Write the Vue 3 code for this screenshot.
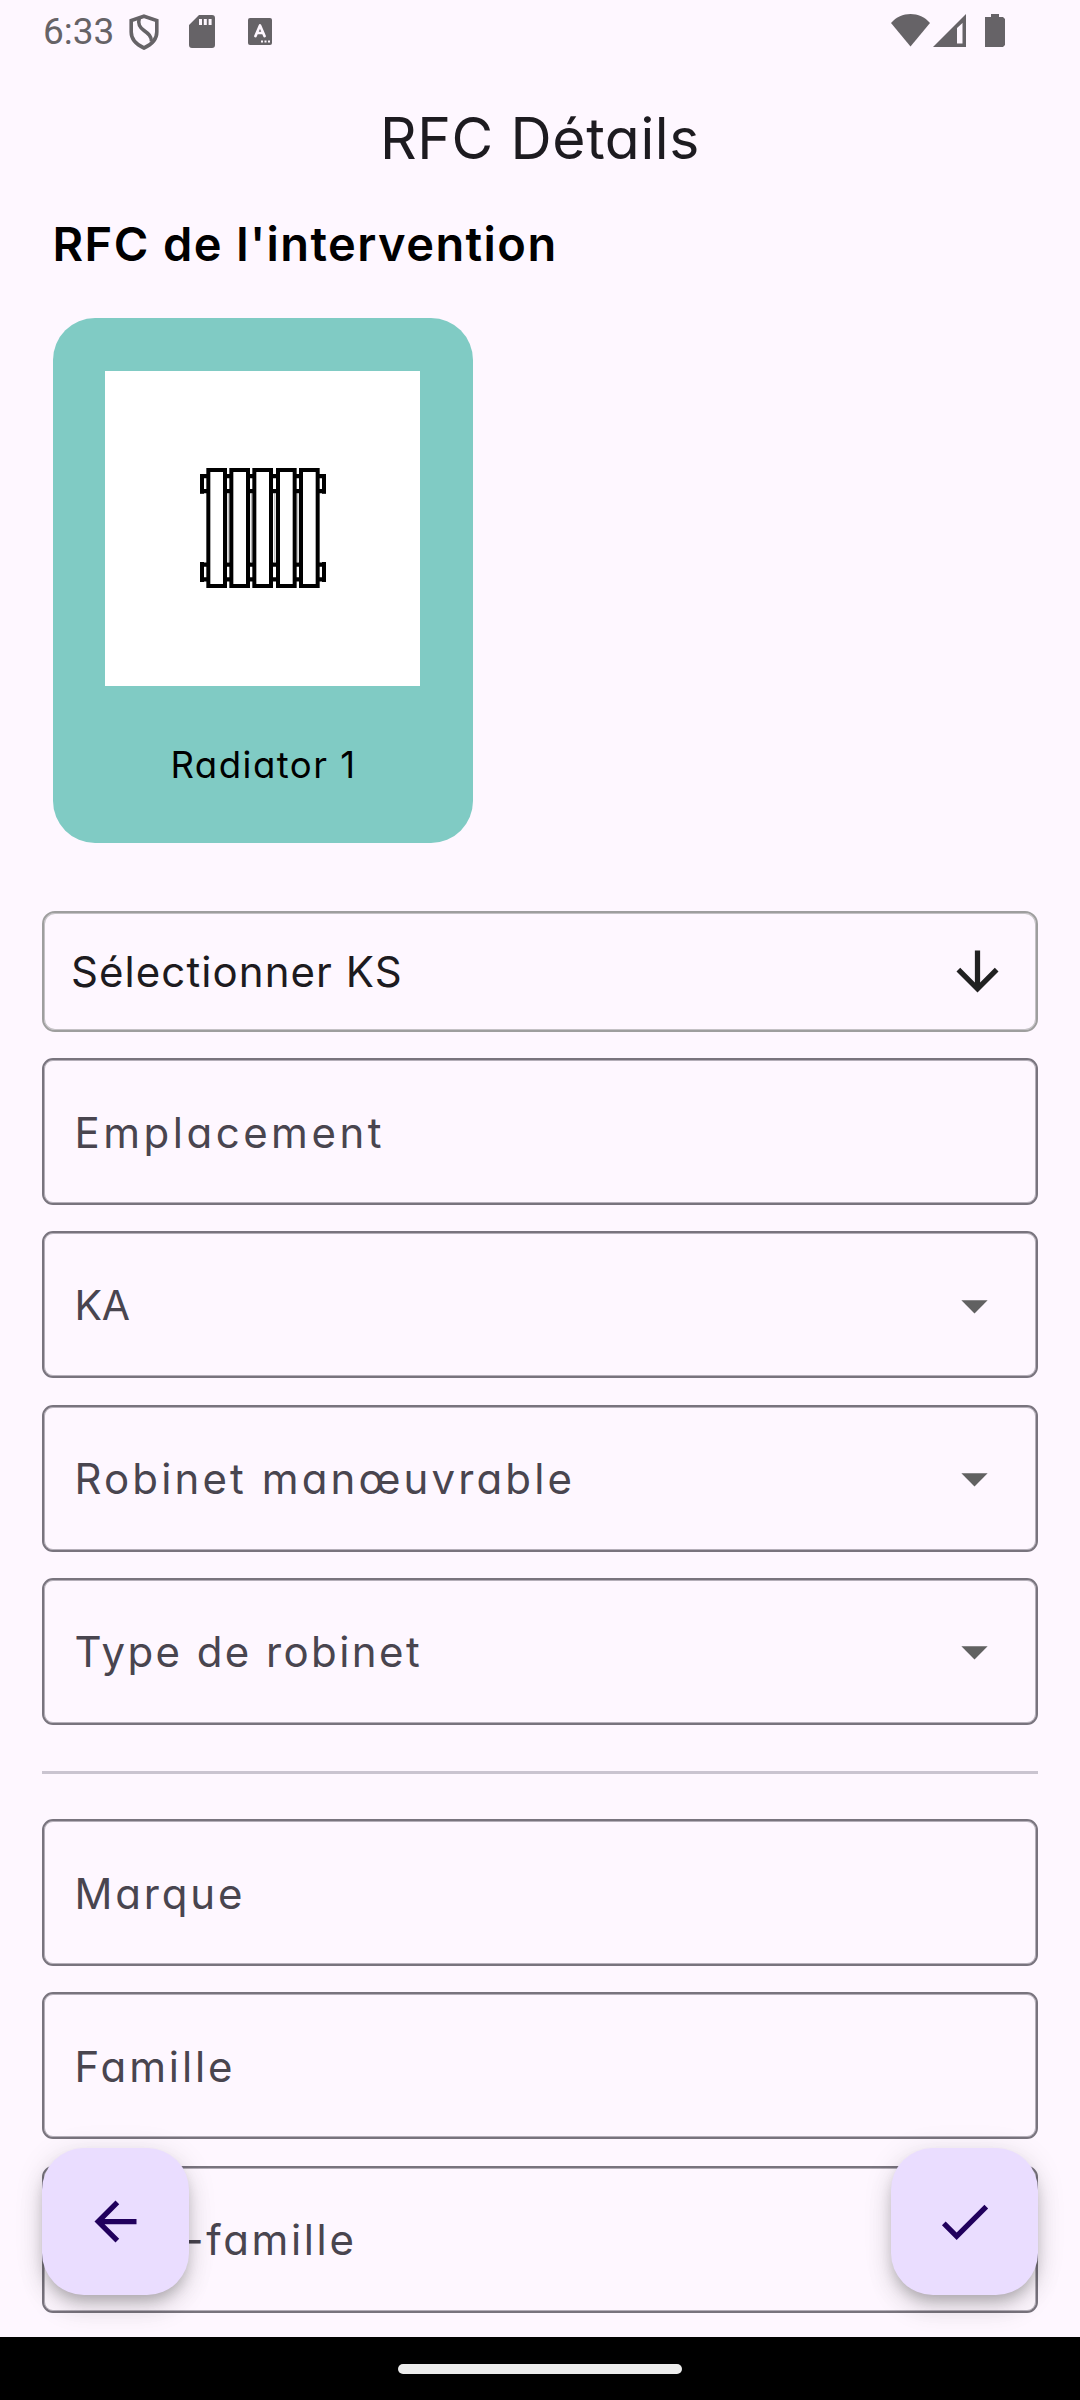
<script setup>
const fields = [
  { id: 'emplacement', label: 'Emplacement' },
  { id: 'ka', label: 'KA', select: true },
  { id: 'robinet', label: 'Robinet manœuvrable', select: true },
  { id: 'type', label: 'Type de robinet', select: true },
]

const productFields = [
  { id: 'marque', label: 'Marque' },
  { id: 'famille', label: 'Famille' },
  { id: 'sous-famille', label: 'Sous-famille' },
]

const radiatorBars = [85, 154, 223, 294, 363]
</script>

<template>
  <div class="screen">
    <header class="status-bar">
      <span class="clock">6:33</span>
      <svg class="ic-shield" viewBox="0 0 30 36" width="30" height="36">
        <path d="M15 2.200 27.800 6.500v11.500c0 7-5 12.500-12.800 16C7.200 30.500 2.200 25 2.200 18V6.500z" fill="none" stroke="#666367" stroke-width="3.600" />
        <path d="M10.300 4c-1.800 6.500.5 9.500 4.700 12.500s7.500 5.500 7.500 11" fill="none" stroke="#666367" stroke-width="3.600" />
      </svg>
      <svg class="ic-sd" viewBox="0 0 26 33" width="26" height="33">
        <path fill="#666367" fill-rule="evenodd" d="M10 0h13a3 3 0 0 1 3 3v27a3 3 0 0 1-3 3H3a3 3 0 0 1-3-3V10zM10 4v6h3V4zm4.800 0v6h3V4zm4.800 0v6h3V4z" />
      </svg>
      <svg class="ic-a" viewBox="0 0 24 27" width="24" height="27">
        <rect width="24" height="27" rx="2" fill="#666367" />
        <path d="M7.500 18 12 7.500 16.500 18M9 15h6" fill="none" stroke="#fef7ff" stroke-width="2.700" stroke-linecap="round" stroke-linejoin="round" />
        <path d="M13 22.500h2v2h-2zm3.500 0h2v2h-2zm3.500 0h2v2h-2z" fill="#fef7ff" />
      </svg>
      <div class="system-icons">
        <svg viewBox="0 0 39 33" width="39" height="33">
          <path d="M0 9C10-3 29-3 39 9L19.500 32.500z" fill="#666367" />
        </svg>
        <svg class="ic-signal" viewBox="0 0 33 33" width="33" height="33">
          <path fill="#666367" fill-rule="evenodd" d="M33 0v33H0zM29.500 9 24 14v15.500h5.500z" />
        </svg>
        <svg class="ic-battery" viewBox="0 0 20 33" width="20" height="33">
          <path d="M6 0h8v3h4l2 2v26l-2 2H0V3h6z" fill="#666367" />
        </svg>
      </div>
    </header>

    <div class="app-bar"><h1>RFC Détails</h1></div>

    <main>
      <h2>RFC de l'intervention</h2>

      <div class="card">
        <div class="card-image">
          <svg viewBox="9 27 480 480" width="160" height="160" fill="none" stroke="#000" stroke-width="12">
            <path d="M66 102v59M66 366v60M432 102v59M432 366v60" />
            <path d="M60 108.500H438M60 153.500H438M60 374H438M60 418H438" stroke-width="13" />
            <path d="M144.500 159v208M214 159v208M284.500 159v208M353.500 159v208" stroke="#777" stroke-width="2" />
            <rect v-for="x in radiatorBars" :key="x" :x="x" y="90" width="50" height="348" fill="#fff" />
          </svg>
        </div>
        <div class="card-label"><span>Radiator 1</span></div>
      </div>

      <button class="ks" type="button">
        <span>Sélectionner KS</span>
        <svg viewBox="0 0 24 24" width="63" height="63">
          <path d="M20 12l-1.410-1.410L13 16.170V4h-2v12.170l-5.580-5.590L4 12l8 8 8-8z" fill="#212121" />
        </svg>
      </button>

      <div class="fields">
        <div v-for="f in fields" :key="f.id" class="field">
          <span :class="f.id">{{ f.label }}</span>
          <svg v-if="f.select" viewBox="0 0 24 24" width="63" height="63">
            <path d="M7 10l5 5 5-5z" fill="#616161" />
          </svg>
        </div>
      </div>

      <div class="divider"></div>

      <div class="fields">
        <div v-for="f in productFields" :key="f.id" class="field">
          <span :class="f.id">{{ f.label }}</span>
        </div>
      </div>
    </main>

    <div class="fab-row">
      <button class="fab" type="button" aria-label="Retour">
        <svg viewBox="0 0 24 24" width="63" height="63">
          <path d="M20 11H7.830l5.590-5.590L12 4l-8 8 8 8 1.410-1.410L7.830 13H20v-2z" fill="#21005d" />
        </svg>
      </button>
      <button class="fab" type="button" aria-label="Valider">
        <svg viewBox="0 0 24 24" width="63" height="63">
          <path d="M9 16.170L4.830 12l-1.420 1.410L9 19 21 7l-1.410-1.410z" fill="#21005d" />
        </svg>
      </button>
    </div>

    <footer class="nav-bar"><div class="pill"></div></footer>
  </div>
</template>

<style>
body {
  margin: 0;
}
</style>

<style scoped>
.screen {
  position: relative;
  display: flex;
  flex-direction: column;
  width: 1080px;
  height: 2400px;
  overflow: hidden;
  background: #fef7ff;
  color: #1d1b20;
  font-family: Inter, "Open Sans", sans-serif;
  font-feature-settings: "cv11";
}
svg {
  display: block;
  flex: none;
}
h1,
h2 {
  margin: 0;
}
button {
  font: inherit;
  color: inherit;
  padding: 0;
  border: 0;
}
span,
h1,
h2 {
  white-space: nowrap;
}

.status-bar {
  display: flex;
  align-items: flex-start;
  height: 49px;
  padding: 14px 75px 0 43px;
}
.clock {
  width: 86px;
  margin-top: -4px;
  font: 400 37px/44px Roboto, sans-serif;
  color: #666367;
}
.ic-sd {
  margin: 1px 0 0 30px;
}
.ic-a {
  margin: 4px 0 0 33px;
}
.system-icons {
  display: flex;
  margin-left: auto;
}
.ic-signal {
  margin-left: 3px;
}
.ic-battery {
  margin-left: 19px;
}

.app-bar {
  display: flex;
  align-items: center;
  justify-content: center;
  height: 150px;
}
h1 {
  font-size: 57px;
  font-weight: 400;
  letter-spacing: 0.63px;
}

main {
  padding: 0 42px;
}
h2 {
  margin-left: 10.5px;
  font-size: 47px;
  font-weight: 600;
  line-height: 61px;
  letter-spacing: 1.42px;
  color: #000;
}
.card {
  display: flex;
  flex-direction: column;
  box-sizing: border-box;
  width: 420px;
  height: 525px;
  margin: 44px 0 0 10.5px;
  padding-top: 53px;
  border-radius: 42px;
  background: #80cbc4;
}
.card-image {
  display: flex;
  align-items: center;
  justify-content: center;
  align-self: center;
  width: 315px;
  height: 315px;
  background: #fff;
}
.card-label {
  display: flex;
  flex: 1;
  align-items: center;
  justify-content: center;
  padding-left: 2px;
  font-size: 36.5px;
  letter-spacing: 1.5px;
  color: #000;
}

.ks {
  display: flex;
  align-items: center;
  justify-content: space-between;
  box-sizing: border-box;
  width: 100%;
  height: 121px;
  margin-top: 68px;
  padding: 0 27px;
  border: 2px solid #9e9e9e;
  box-shadow: inset 0 0 0 1px #c4c1c5;
  border-radius: 13px;
  background: transparent;
  font-size: 42px;
  letter-spacing: 1.07px;
}
.fields {
  display: flex;
  flex-direction: column;
  gap: 26.25px;
  margin-top: 26.2px;
}
.field {
  display: flex;
  align-items: center;
  justify-content: space-between;
  box-sizing: border-box;
  height: 147px;
  padding: 1px 30px 0 30.5px;
  border: 2px solid #79747e;
  box-shadow: inset 0 0 0 1px #b5afb9;
  border-radius: 11px;
  font-size: 42px;
  color: #49454f;
}
.emplacement {
  letter-spacing: 3.5px;
}
.ka {
  font-size: 41px;
  letter-spacing: -0.2px;
}
.robinet {
  letter-spacing: 3.12px;
}
.type {
  letter-spacing: 2.42px;
}
.marque {
  letter-spacing: 2.84px;
}
.famille {
  letter-spacing: 2.9px;
}
.sous-famille {
  letter-spacing: 2.65px;
}
.divider {
  height: 3px;
  margin-top: 45.8px;
  background: #cac4d0;
}
.divider + .fields {
  margin-top: 45.3px;
}

.fab-row {
  position: absolute;
  left: 42px;
  right: 42px;
  bottom: 105px;
  display: flex;
  justify-content: space-between;
}
.fab {
  display: flex;
  align-items: center;
  justify-content: center;
  width: 147px;
  height: 147px;
  border-radius: 42px;
  background: #eaddff;
  box-shadow:
    0 8px 13px -3px rgba(0, 0, 0, 0.2),
    0 16px 26px 0 rgba(0, 0, 0, 0.1),
    0 3px 30px 0 rgba(0, 0, 0, 0.1);
}
.nav-bar {
  position: absolute;
  left: 0;
  right: 0;
  bottom: 0;
  display: flex;
  align-items: center;
  justify-content: center;
  height: 63px;
  background: #000;
}
.pill {
  width: 284px;
  height: 10px;
  border-radius: 5px;
  background: #ececec;
}
</style>
